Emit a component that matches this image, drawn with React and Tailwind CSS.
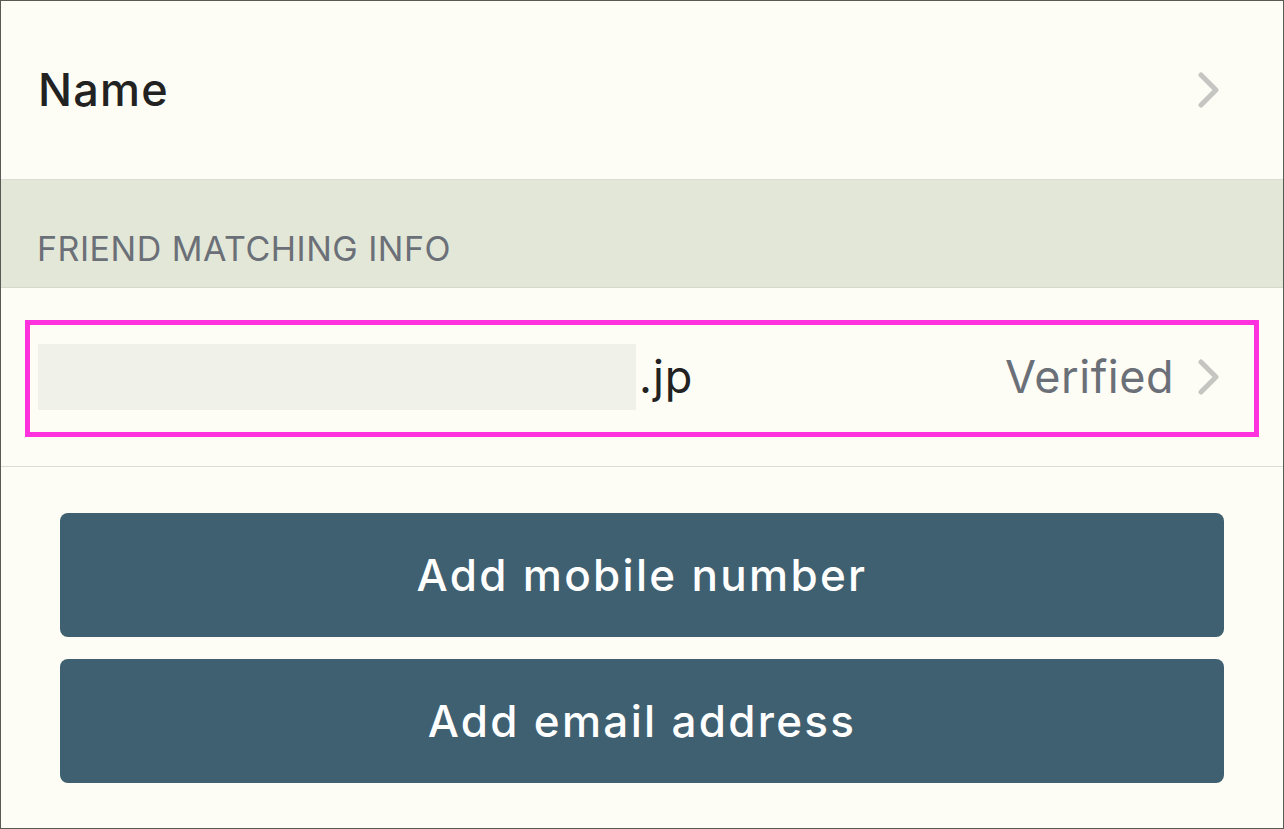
import React from "react";

const Chevron = () => (
  <svg width="24" height="36" viewBox="0 0 24 36" fill="none">
    <path d="M4 3 L19 18 L4 33" stroke="#c5c6c2" strokeWidth="5" strokeLinecap="round" strokeLinejoin="round" />
  </svg>
);

const App = () => {
  return (
    <div
      className="h-[829px] w-[1284px] overflow-hidden border border-[#5a5a55] bg-[#fdfdf5] flex flex-col"
      style={{ fontFamily: "Inter, 'Noto Sans', sans-serif" }}
    >
      {/* Name row */}
      <div className="h-[179px] shrink-0 flex items-center justify-between pl-[37px] pr-[62px] border-b border-[#dcdcd4]">
        <span className="text-[45px] font-medium text-[#222] tracking-[1.2px]">Name</span>
        <Chevron />
      </div>

      {/* Section header */}
      <div className="h-[108px] shrink-0 bg-[#e3e7d7] border-b border-[#d6d9cc] flex items-end pb-[13px] pl-[36px]">
        <span className="text-[34px] text-[#6b7078] tracking-[0.5px]">FRIEND MATCHING INFO</span>
      </div>

      {/* Email row */}
      <div className="relative h-[179px] shrink-0 flex items-center justify-between pl-[37px] pr-[62px] border-b border-[#dcdcd4]">
        <div className="flex items-center">
          <div className="w-[598px] h-[66px] bg-[#f0f2ea]" />
          <span className="ml-[3px] text-[45px] text-[#222] tracking-[1px]">.jp</span>
        </div>
        <div className="flex items-center gap-[23px]">
          <span className="text-[45px] text-[#6b7078] tracking-[0.5px]">Verified</span>
          <Chevron />
        </div>
        <div className="absolute left-[24px] right-[24px] top-[32px] bottom-[29px] border-[5px] border-[#ff33dd] pointer-events-none" />
      </div>

      {/* Buttons */}
      <div className="flex flex-col gap-[22px] pt-[46px] px-[59px]">
        <button className="h-[124px] w-full rounded-[8px] bg-[#3f6070] text-white text-[44px] font-medium tracking-[2.3px]">
          Add mobile number
        </button>
        <button className="h-[124px] w-full rounded-[8px] bg-[#3f6070] text-white text-[44px] font-medium tracking-[2.3px]">
          Add email address
        </button>
      </div>
    </div>
  );
};

export default App;
